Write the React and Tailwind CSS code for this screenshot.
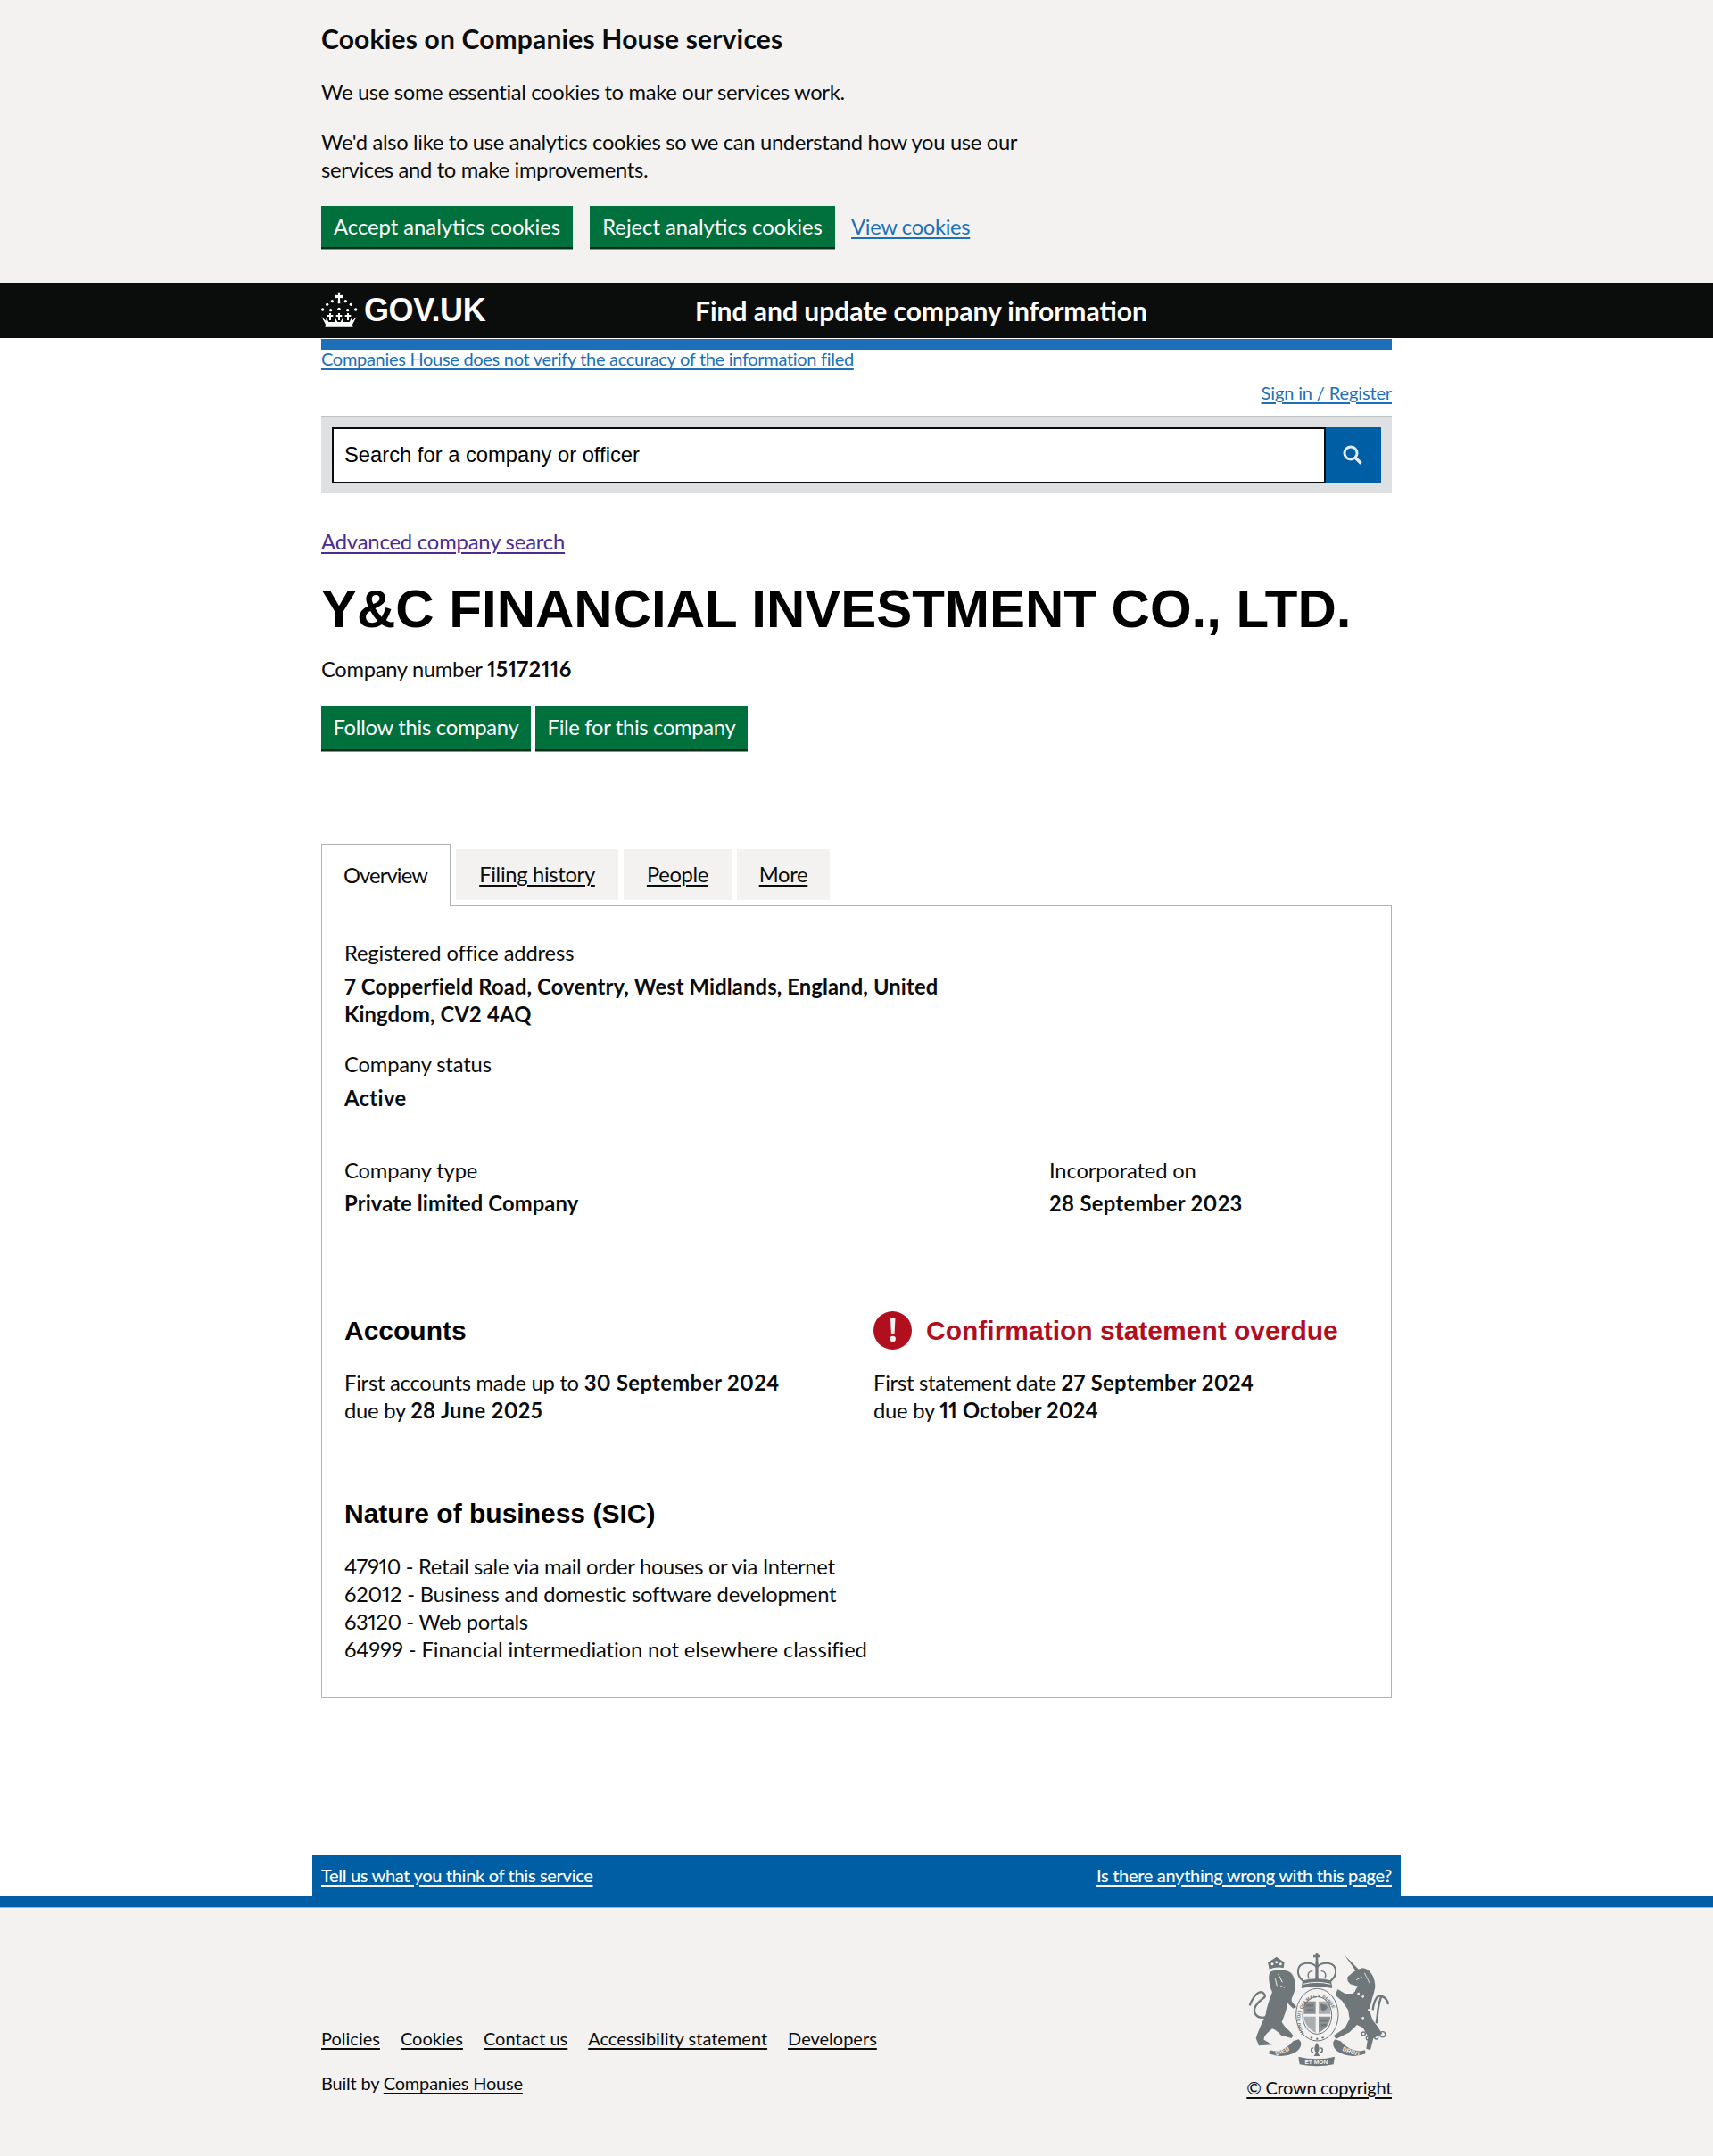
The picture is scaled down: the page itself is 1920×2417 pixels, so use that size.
import React from 'react';

const body = "text-[23.75px] leading-[31px] tracking-[-0.32px]";
const content = "text-[23.75px] leading-[31px] tracking-[-0.15px]";
const para = "text-[23.75px] leading-[31px] tracking-[-0.25px]";
const small = "text-[20px] tracking-[-0.3px]";
const foot = "text-[20px] leading-[25px]";
const arial = "font-['Liberation_Sans',Arial,sans-serif]";
const line = "underline decoration-[2px] underline-offset-[3px]";
const h2 = `${arial} font-bold text-[30px] leading-[38px]`;
const b = "font-bold tracking-[0.13px]";
const date = "font-bold tracking-[0.35px]";

function Crown() {
  const dots = [[52,44],[97,44],[35,55],[115,55],[20,72],[131,72],[75,70],[47,74],[104,74]];
  const crosses = [45,75,105];
  return (
    <svg viewBox="0 0 150 144" className="w-[50px] h-[48px] shrink-0 -ml-[5px] mb-[2px]" fill="#fff" aria-hidden="true">
      <path d="M71 14 H79 L78 24 L88 23 V34 L78 33 L79 52 H71 L72 33 L62 34 V23 L72 24 Z" />
      {dots.map(([x, y], i) => <circle key={i} cx={x} cy={y} r="5" />)}
      {crosses.map((x) => <path key={x} d={`M${x-3} 84 H${x+3} V90 H${x+10} V96 H${x+3} V108 H${x-3} V96 H${x-10} V90 H${x-3} Z`} />)}
      <path d="M16 96 L31 110 L32 98 L40 114 L60 114 L62 100 L70 114 L80 114 L88 100 L90 114 L110 114 L118 98 L119 110 L134 96 L120 122 L122 131 H28 L30 122 Z" />
    </svg>
  );
}

function Crest() {
  const c = "#6f777b", l = "#f3f2f1";
  return (
    <svg viewBox="0 0 492 405" className="w-[164px] h-[135px]" aria-hidden="true">
      <defs>
        <path id="garter" d="M197 284 A58 74 0 1 1 287 284" />
      </defs>
      {/* lion */}
      <path fill={c} d="M82 78 C92 70 130 66 150 78 C165 90 170 118 165 140 C160 160 150 168 158 180 L172 195 L160 200 L140 180 C140 205 130 225 122 245 C130 262 150 275 160 290 L155 300 L120 290 C110 280 100 270 90 268 C75 280 60 295 62 305 L90 322 L45 325 L35 300 C45 270 60 240 68 220 C72 190 85 160 90 145 C80 125 75 95 82 78 Z" />
      <path fill="none" stroke={c} strokeWidth="7" d="M70 228 C40 238 20 215 35 190 C50 165 75 165 62 150 C50 136 30 150 14 190" />
      <path fill="none" stroke={l} strokeWidth="3" d="M110 84 L124 112 M100 100 L106 124 M118 124 L132 130" />
      <path fill={c} d="M80 68 L75 44 L90 36 L104 26 L118 36 L131 44 L128 64 Q104 58 80 68 Z" />
      <circle cx="90" cy="50" r="4.5" fill={l} /><circle cx="104" cy="44" r="4.5" fill={l} /><circle cx="118" cy="50" r="4.5" fill={l} />
      {/* unicorn */}
      <path fill={c} d="M333 20 L384 72 L374 78 Z" />
      <path fill={c} d="M342 96 C356 80 376 66 396 64 C424 70 436 100 436 128 C432 150 424 170 420 190 C416 215 425 240 440 255 L460 285 L430 300 L420 340 L406 335 L412 295 L395 265 L375 255 L350 280 L305 302 L296 292 L335 265 L350 235 L345 205 L325 175 L302 155 L310 135 L335 150 L362 150 L378 125 L352 118 L344 108 Z" />
      <path fill="none" stroke={c} strokeWidth="7" d="M428 205 C432 170 445 152 458 158 C472 164 482 178 478 186 M458 158 C445 180 445 220 440 250" />
      <g fill="none" stroke={c} strokeWidth="4">
        <circle cx="397" cy="285" r="6" /><circle cx="412" cy="300" r="6" /><circle cx="440" cy="297" r="6" /><circle cx="461" cy="287" r="9" />
      </g>
      <g fill={l}>
        <circle cx="345" cy="135" r="4" /><circle cx="365" cy="140" r="4" /><circle cx="380" cy="150" r="4" /><circle cx="395" cy="160" r="4" /><circle cx="415" cy="205" r="4" /><circle cx="395" cy="232" r="4" />
      </g>
      <path fill="none" stroke={l} strokeWidth="2.5" d="M372 104 L392 94 M400 80 L418 116" />
      {/* royal crown */}
      <path fill={c} d="M236 12 H244 V20 H252 V28 H244 V44 H236 V28 H228 V20 H236 Z" />
      <path fill="none" stroke={c} strokeWidth="6" d="M194 108 C168 86 172 52 200 48 C220 46 234 54 240 62 C246 54 260 46 280 48 C308 52 312 86 286 108" />
      <rect x="235" y="44" width="10" height="58" fill={c} />
      <path fill="none" stroke={c} strokeWidth="4" d="M214 100 C206 86 212 74 226 74 M266 100 C274 86 268 74 254 74" />
      <path fill={c} d="M192 106 Q240 94 288 106 L292 132 Q240 120 188 132 Z" />
      <path fill="none" stroke={l} strokeWidth="3" d="M194 118 Q240 106 286 118" />
      {/* garter and shield */}
      <ellipse cx="241" cy="221" rx="71" ry="88" fill={l} stroke={c} strokeWidth="3" />
      <ellipse cx="241" cy="223" rx="49" ry="63" fill="none" stroke={c} strokeWidth="3" />
      <text fontFamily="Liberation Sans, sans-serif" fontSize="15.5" fontWeight="700" fill={c}>
        <textPath href="#garter">HONI SOIT QUI MAL Y PENSE</textPath>
      </text>
      <path fill={c} opacity="0.8" d="M198 176 H236 V218 H196 Z M246 227 H286 C284 252 266 272 246 281 Z" />
      <path fill={c} opacity="0.55" d="M246 176 H284 L286 218 H246 Z M196 227 H236 V281 C216 272 198 252 196 227 Z" />
      <g fill={c}>
        <path d="M252 184 L272 188 L276 198 L262 210 L254 204 Z" />
        <path d="M204 186 H228 V194 H204 Z M206 202 H230 V210 H206 Z M252 236 H276 V244 H252 Z M254 252 H272 V260 H254 Z" opacity="0.9" />
        <circle cx="222" cy="298" r="3.5" /><circle cx="241" cy="302" r="3.5" /><circle cx="260" cy="298" r="3.5" />
      </g>
      {/* motto */}
      <path fill={c} d="M82 340 C110 350 140 335 160 310 L178 304 C192 312 190 332 170 346 C150 360 120 362 100 358 L78 352 Z" />
      <path fill={c} d="M402 340 C374 350 340 335 320 310 L302 304 C290 312 292 332 312 346 C332 360 362 362 382 358 L404 352 Z" />
      <path fill={c} d="M178 362 C215 372 265 372 300 362 L296 388 C260 396 220 396 182 388 Z" />
      <path fill={c} d="M240 315 C250 328 250 340 243 348 L250 360 L230 360 L237 348 C230 340 230 328 240 315 Z" />
      <path fill="none" stroke={c} strokeWidth="5" d="M228 348 C218 346 220 330 228 334 M252 348 C262 346 260 330 252 334" />
      <g fontFamily="Liberation Sans, sans-serif" fontSize="20" fontWeight="700" fill={l} textAnchor="middle">
        <text x="126" y="350" transform="rotate(-20 126 350)">DIEU</text>
        <text x="238" y="388">ET MON</text>
        <text x="354" y="352" transform="rotate(20 354 352)">DROIT</text>
      </g>
    </svg>
  );
}

function Green({ className, children }) {
  return (
    <a className={`flex items-center justify-center bg-[#00703c] text-white shadow-[0_2px_0_#002d18,0_3px_0_#7a9a8a] text-[23.75px] leading-[31px] ${className}`}>
      {children}
    </a>
  );
}

export default function App() {
  return (
    <div className="font-[Lato,sans-serif] proportional-nums text-[#0b0c0c] bg-white">
      <section className="bg-[#f3f2f1] h-[317px] pt-[24px]">
        <div className="w-[1200px] mx-auto">
          <h2 className="font-bold text-[30px] leading-[38px] tracking-[0.17px]">Cookies on Companies House services</h2>
          <p className={`mt-[26px] ${body}`}>We use some essential cookies to make our services work.</p>
          <p className={`mt-[25px] ${body}`}>We'd also like to use analytics cookies so we can understand how you use our<br />services and to make improvements.</p>
          <div className="flex items-center mt-[25px]">
            <Green className="w-[282px] h-[46px]">Accept analytics cookies</Green>
            <Green className="w-[275px] h-[46px] ml-[19px]">Reject analytics cookies</Green>
            <a className={`ml-[18px] text-[#1d70b8] ${body} ${line}`}>View cookies</a>
          </div>
        </div>
      </section>

      <header className="bg-[#0b0c0c] h-[62px]">
        <div className="w-[1200px] h-full mx-auto flex items-center">
          <Crown />
          <span className={`${arial} ml-[3px] w-[370px] text-white font-bold text-[36px] leading-[40px] tracking-[-0.4px]`}>GOV.UK</span>
          <span className="ml-[1px] text-white font-bold text-[30px] leading-[38px]">Find and update company information</span>
        </div>
      </header>

      <main className="w-[1200px] mx-auto">
        <div className="mt-px h-[12px] bg-[#1d70b8]"></div>
        <a className={`block text-[#1d70b8] leading-[20px] ${small} ${line}`}>Companies House does not verify the accuracy of the information filed</a>
        <div className="mt-[17px] flex justify-end">
          <a className={`text-[#1d70b8] text-[20px] leading-[22px] tracking-[-0.13px] ${line}`}>Sign in / Register</a>
        </div>
        <div className="mt-[15px] h-[87px] bg-[#dee0e2] border-t border-[#bfc1c3] pt-[12px] px-[12px] flex">
          <div className={`flex-1 h-[63px] bg-white border-2 border-[#0b0c0c] flex items-center pl-[12px] pb-px text-black ${arial} text-[23.75px]`}>Search for a company or officer</div>
          <div className="w-[62px] h-[63px] bg-[#005ea5] flex items-center justify-center pr-[2px] pb-px">
            <svg viewBox="0 0 22 22" className="w-[22px] h-[22px]" fill="none" stroke="#e4edf4" aria-hidden="true">
              <circle cx="9" cy="9" r="7" strokeWidth="3" />
              <path d="M14 14 L20.5 20.5" strokeWidth="3.4" />
            </svg>
          </div>
        </div>

        <a className={`block mt-[39px] text-[#4c2c92] ${content} ${line}`}>Advanced company search</a>
        <h1 className={`${arial} mt-[22px] text-black font-bold text-[60px] leading-[75px]`}>Y&amp;C FINANCIAL INVESTMENT CO., LTD.</h1>
        <p className={`mt-[15px] ${body}`}>Company number <span className={date}>15172116</span></p>
        <div className="mt-[25px] flex gap-[5px]">
          <Green className="w-[235px] h-[49px] tracking-[-0.25px]">Follow this company</Green>
          <Green className="w-[238px] h-[49px] tracking-[-0.3px]">File for this company</Green>
        </div>

        <div className="mt-[106px] flex items-start h-[70px] -mb-px relative">
          <div className="w-[145px] h-[70px] bg-white border border-b-0 border-[#b1b4b6] pl-[24px] pt-[19px] text-[23.75px] leading-[31px] tracking-[-0.9px]">Overview</div>
          <a className={`ml-[6px] mt-[6px] w-[182px] h-[57px] bg-[#f3f2f1] flex items-center justify-center ${body} ${line}`}>Filing history</a>
          <a className={`ml-[6px] mt-[6px] w-[121px] h-[57px] bg-[#f3f2f1] flex items-center justify-center ${body} ${line}`}>People</a>
          <a className={`ml-[6px] mt-[6px] w-[104px] h-[57px] bg-[#f3f2f1] flex items-center justify-center ${body} ${line}`}>More</a>
        </div>

        <div className="border border-[#b1b4b6] h-[888px] pt-[37px] pl-[25px] pr-[25px]">
          <div className={content}>Registered office address</div>
          <div className={`mt-[7px] ${content} ${b}`}>7 Copperfield Road, Coventry, West Midlands, England, United<br />Kingdom, CV2 4AQ</div>
          <div className={`mt-[25px] ${content}`}>Company status</div>
          <div className={`mt-[7px] ${content} ${date}`}>Active</div>

          <div className="mt-[50px] grid grid-cols-[790px_1fr]">
            <div>
              <div className={content}>Company type</div>
              <div className={`mt-[6px] ${content} ${b}`}>Private limited Company</div>
            </div>
            <div>
              <div className={content}>Incorporated on</div>
              <div className={`mt-[6px] ${content} ${date}`}>28 September 2023</div>
            </div>
          </div>

          <div className="mt-[105px] grid grid-cols-[593px_1fr]">
            <div>
              <h2 className={`${h2} text-black h-[43px] flex items-center`}>Accounts</h2>
              <p className={`mt-[22px] ${para}`}>First accounts made up to <span className={date}>30 September 2024</span><br />due by <span className={date}>28 June 2025</span></p>
            </div>
            <div>
              <div className="h-[43px] flex items-center gap-[16px]">
                <svg viewBox="0 0 43 43" className="w-[43px] h-[43px] shrink-0" aria-hidden="true">
                  <circle cx="21.5" cy="21.5" r="21.5" fill="#b10e1e" />
                  <path d="M19 7 H24.5 L23.6 25 H19.9 Z" fill="#f3f2f1" />
                  <circle cx="21.7" cy="31" r="3.2" fill="#f3f2f1" />
                </svg>
                <h2 className={`${h2} text-[#b10e1e]`}>Confirmation statement overdue</h2>
              </div>
              <p className={`mt-[22px] ${para}`}>First statement date <span className={date}>27 September 2024</span><br />due by <span className={b}>11 October 2024</span></p>
            </div>
          </div>

          <h2 className={`${h2} text-black mt-[81px]`}>Nature of business (SIC)</h2>
          <ul className="mt-[25px] text-[23.75px] leading-[31px]">
            <li className="tracking-[-0.31px]">47910 - Retail sale via mail order houses or via Internet</li>
            <li className="tracking-[-0.21px]">62012 - Business and domestic software development</li>
            <li className="tracking-[-0.39px]">63120 - Web portals</li>
            <li className="tracking-[-0.1px]">64999 - Financial intermediation not elsewhere classified</li>
          </ul>
        </div>
      </main>

      <footer className="mt-[177px]">
        <div className="w-[1220px] h-[46px] mx-auto bg-[#005ea5] px-[10px] pb-[3px] flex items-center justify-between text-white text-[20px] leading-[22px] tracking-[-0.33px] font-medium">
          <a className={line}>Tell us what you think of this service</a>
          <a className={line}>Is there anything wrong with this page?</a>
        </div>
        <div className="h-[12px] bg-[#005ea5]"></div>
        <div className="bg-[#f3f2f1] h-[279px] border-t border-[#b1b4b6]">
          <div className="w-[1200px] mx-auto flex justify-between">
            <div className="pt-[134px]">
              <nav className={`flex gap-[23px] ${foot}`}>
                <a className={line}>Policies</a>
                <a className={line}>Cookies</a>
                <a className={line}>Contact us</a>
                <a className={line}>Accessibility statement</a>
                <a className={line}>Developers</a>
              </nav>
              <p className={`mt-[25px] ${foot} tracking-[-0.2px]`}>Built by <a className={line}>Companies House</a></p>
            </div>
            <div className="pt-[46px] flex flex-col items-end">
              <Crest />
              <a className={`mt-[8px] ${foot} tracking-[-0.3px] ${line}`}>© Crown copyright</a>
            </div>
          </div>
        </div>
      </footer>
    </div>
  );
}
